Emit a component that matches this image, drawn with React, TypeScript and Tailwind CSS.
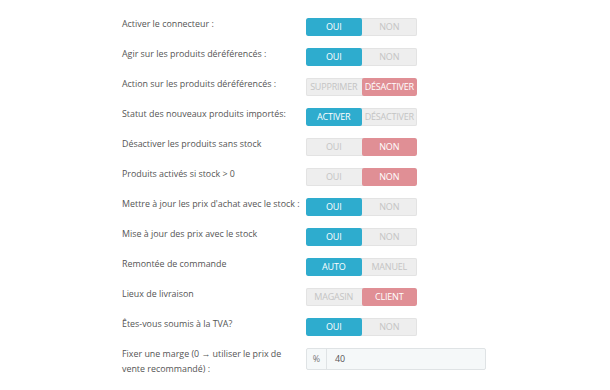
import React from 'react';

type Tone = 'blue' | 'red';

interface Row {
  label: string;
  left: string;
  right: string;
  active: 0 | 1;
  tone: Tone;
}

const rows: Row[] = [
  { label: 'Activer le connecteur :', left: 'OUI', right: 'NON', active: 0, tone: 'blue' },
  { label: 'Agir sur les produits déréférencés :', left: 'OUI', right: 'NON', active: 0, tone: 'blue' },
  { label: 'Action sur les produits déréférencés :', left: 'SUPPRIMER', right: 'DÉSACTIVER', active: 1, tone: 'red' },
  { label: 'Statut des nouveaux produits importés:', left: 'ACTIVER', right: 'DÉSACTIVER', active: 0, tone: 'blue' },
  { label: 'Désactiver les produits sans stock', left: 'OUI', right: 'NON', active: 1, tone: 'red' },
  { label: 'Produits activés si stock > 0', left: 'OUI', right: 'NON', active: 1, tone: 'red' },
  { label: "Mettre à jour les prix d'achat avec le stock :", left: 'OUI', right: 'NON', active: 0, tone: 'blue' },
  { label: 'Mise à jour des prix avec le stock', left: 'OUI', right: 'NON', active: 0, tone: 'blue' },
  { label: 'Remontée de commande', left: 'AUTO', right: 'MANUEL', active: 0, tone: 'blue' },
  { label: 'Lieux de livraison', left: 'MAGASIN', right: 'CLIENT', active: 1, tone: 'red' },
  { label: 'Êtes-vous soumis à la TVA?', left: 'OUI', right: 'NON', active: 0, tone: 'blue' },
];

function Switch({ left, right, active, tone }: Omit<Row, 'label'>) {
  const on = tone === 'blue' ? 'bg-[#2eacce] text-white' : 'bg-[#e08f95] text-white';
  const off = 'text-[#c4c4c4]';
  return (
    <div className="mt-0.5 flex h-[18px] w-[111px] overflow-hidden rounded-[2px] bg-[#eeeeee] shadow-[inset_0_0_0_1px_#e3e3e3] text-[9px] leading-[18px] tracking-[-0.2px]">
      <span className={`flex-1 text-center rounded-[2px] ${active === 0 ? on : off}`}>{left}</span>
      <span className={`flex-1 text-center rounded-[2px] ${active === 1 ? on : off}`}>{right}</span>
    </div>
  );
}

export default function App() {
  return (
    <div className="min-h-[390px] w-[610px] bg-white pt-4 pl-[122px] font-['Open_Sans',sans-serif] text-[#555]">
      {rows.map((r) => (
        <div key={r.label} className="flex h-[30px] items-start">
          <div className="w-[184px] whitespace-nowrap text-[8.9px] leading-[16px]">{r.label}</div>
          <Switch left={r.left} right={r.right} active={r.active} tone={r.tone} />
        </div>
      ))}
      <div className="flex items-start">
        <div className="w-[184px] pr-2 text-[8.9px] leading-[15px]">
          Fixer une marge (0 → utiliser le prix de vente recommandé) :
        </div>
        <div className="mt-0.5 flex h-[22px] w-[180px] rounded-[2px] border border-[#dfe3e5] bg-[#f5f8f9] text-[8.9px] leading-[20px]">
          <span className="w-[20px] border-r border-[#dfe3e5] text-center text-[#777]">%</span>
          <span className="pl-2">40</span>
        </div>
      </div>
    </div>
  );
}
